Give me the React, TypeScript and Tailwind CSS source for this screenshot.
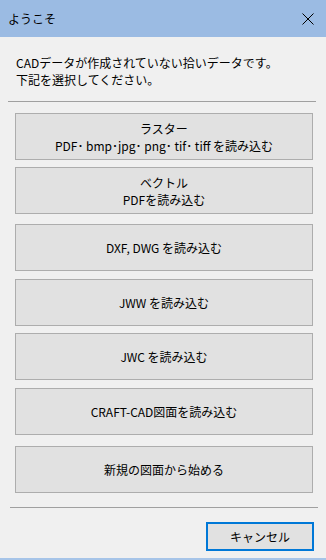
import React from 'react';

const font = { fontFamily: '"Noto Sans CJK JP", "Noto Sans", sans-serif' };

function ChoiceButton({ children, className = '' }: { children: React.ReactNode; className?: string }) {
  return (
    <button
      className={`h-[47px] w-[298px] border border-[#adadad] bg-[#e1e1e1] text-[12px] leading-[17px] text-black flex flex-col items-center justify-center ${className}`}
    >
      {children}
    </button>
  );
}

export default function App() {
  return (
    <div className="w-[326px] h-[560px] bg-[#f0f0f0] flex flex-col border-b-2 border-[#a6c4e8]" style={font}>
      {/* Title bar */}
      <div className="h-[37px] bg-[#9bbbe3] flex items-center justify-between pl-[8px] pr-[12px] shrink-0">
        <span className="text-[12px] text-black">ようこそ</span>
        <svg width="12" height="12" viewBox="0 0 12 12" className="text-black">
          <path d="M0.5 0.5 L11.5 11.5 M11.5 0.5 L0.5 11.5" stroke="currentColor" strokeWidth="1" />
        </svg>
      </div>

      {/* Message */}
      <div className="px-[16px] pt-[17px] text-[12px] leading-[17px] text-black">
        <p>CADデータが作成されていない拾いデータです。</p>
        <p>下記を選択してください。</p>
      </div>
      <div className="mx-[8px] mt-[13px] w-[308px] h-px bg-[#a0a0a0]" />

      {/* Choices */}
      <div className="flex flex-col pl-[15px]">
        <ChoiceButton className="mt-[11px]">
          <span>ラスター</span>
          <span>PDF･ bmp･jpg･ png･ tif･ tiff を読み込む</span>
        </ChoiceButton>
        <ChoiceButton className="mt-[7px]">
          <span>ベクトル</span>
          <span>PDFを読み込む</span>
        </ChoiceButton>
        <ChoiceButton className="mt-[10px]">DXF, DWG を読み込む</ChoiceButton>
        <ChoiceButton className="mt-[8px]">JWW を読み込む</ChoiceButton>
        <ChoiceButton className="mt-[7px]">JWC を読み込む</ChoiceButton>
        <ChoiceButton className="mt-[8px]">CRAFT-CAD図面を読み込む</ChoiceButton>
        <ChoiceButton className="mt-[11px]">新規の図面から始める</ChoiceButton>
      </div>

      <div className="ml-[10px] mt-[14px] w-[308px] h-px bg-[#a0a0a0]" />

      {/* Footer */}
      <div className="flex justify-end pr-[12px] mt-[14px]">
        <button className="w-[108px] h-[29px] border-2 border-[#0078d7] bg-[#e1e1e1] text-[12px] text-black">
          キャンセル
        </button>
      </div>
    </div>
  );
}
